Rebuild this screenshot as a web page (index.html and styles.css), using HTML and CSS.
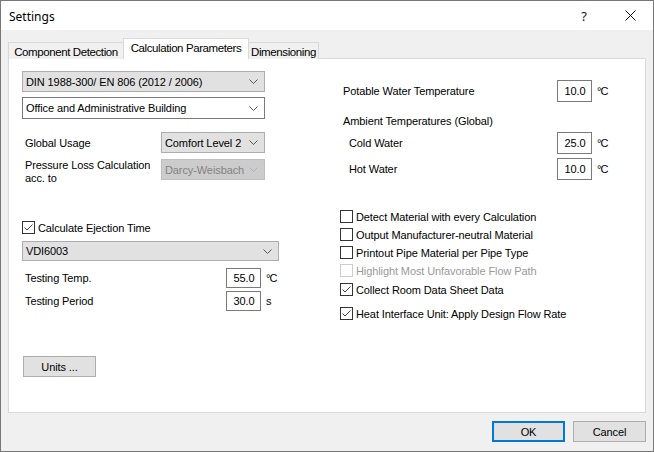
FILE: index.html
```html
<!DOCTYPE html>
<html>
<head>
<meta charset="utf-8">
<title>Settings</title>
<link rel="stylesheet" href="styles.css">
</head>
<body>
<div class="window">
  <div class="titlebar">
    <span class="title">Settings</span>
    <span class="tb-btn help">?</span>
    <span class="tb-btn close"><svg width="11" height="11" viewBox="0 0 11 11"><path d="M0.5 0.5 L10.5 10.5 M10.5 0.5 L0.5 10.5" stroke="#111" stroke-width="1" fill="none"/></svg></span>
  </div>
  <div class="tabs">
    <div class="tab tab-first">Component Detection</div>
    <div class="tab active">Calculation Parameters</div>
    <div class="tab tab-last">Dimensioning</div>
  </div>
  <div class="pane">
    <div class="col-left">
      <div class="combo combo-grey combo-norm">
        <span>DIN 1988-300/ EN 806 (2012 / 2006)</span>
        <svg class="chev" width="9" height="5" viewBox="0 0 9 5"><path d="M0.5 0.5 L4.5 4.5 L8.5 0.5" stroke="#555" fill="none"/></svg>
      </div>
      <div class="combo combo-white combo-usage">
        <span>Office and Administrative Building</span>
        <svg class="chev" width="9" height="5" viewBox="0 0 9 5"><path d="M0.5 0.5 L4.5 4.5 L8.5 0.5" stroke="#555" fill="none"/></svg>
      </div>
      <div class="frow frow-global">
        <span class="flabel">Global Usage</span>
        <div class="combo combo-grey combo-small">
          <span>Comfort Level 2</span>
          <svg class="chev" width="9" height="5" viewBox="0 0 9 5"><path d="M0.5 0.5 L4.5 4.5 L8.5 0.5" stroke="#555" fill="none"/></svg>
        </div>
      </div>
      <div class="frow frow-pressure">
        <span class="flabel two-line">Pressure Loss Calculation<br>acc. to</span>
        <div class="combo combo-disabled combo-small">
          <span>Darcy-Weisbach</span>
          <svg class="chev" width="9" height="5" viewBox="0 0 9 5"><path d="M0.5 0.5 L4.5 4.5 L8.5 0.5" stroke="#b0b0b0" fill="none"/></svg>
        </div>
      </div>
      <div class="check check-eject">
        <span class="box"><svg width="11" height="11" viewBox="0 0 11 11"><path d="M1.5 5.5 L4 8 L9.5 2.5" stroke="#444" fill="none"/></svg></span>
        <span>Calculate Ejection Time</span>
      </div>
      <div class="combo combo-grey combo-vdi">
        <span>VDI6003</span>
        <svg class="chev" width="9" height="5" viewBox="0 0 9 5"><path d="M0.5 0.5 L4.5 4.5 L8.5 0.5" stroke="#555" fill="none"/></svg>
      </div>
      <div class="irow irow-temp">
        <span class="ilabel">Testing Temp.</span>
        <span class="input">55.0</span>
        <span class="unit">°C</span>
      </div>
      <div class="irow irow-period">
        <span class="ilabel">Testing Period</span>
        <span class="input">30.0</span>
        <span class="unit">s</span>
      </div>
      <div class="btn btn-units">Units ...</div>
    </div>
    <div class="col-right">
      <div class="rrow rrow-potable">
        <span class="rlabel">Potable Water Temperature</span>
        <span class="input input-tall">10.0</span>
        <span class="unit">°C</span>
      </div>
      <div class="group-label">Ambient Temperatures (Global)</div>
      <div class="rrow rrow-cold">
        <span class="rlabel indent">Cold Water</span>
        <span class="input input-tall">25.0</span>
        <span class="unit">°C</span>
      </div>
      <div class="rrow rrow-hot">
        <span class="rlabel indent">Hot Water</span>
        <span class="input input-tall">10.0</span>
        <span class="unit">°C</span>
      </div>
      <div class="checks">
        <div class="check rcheck c1"><span class="box"></span><span>Detect Material with every Calculation</span></div>
        <div class="check rcheck c2"><span class="box"></span><span>Output Manufacturer-neutral Material</span></div>
        <div class="check rcheck c3"><span class="box"></span><span>Printout Pipe Material per Pipe Type</span></div>
        <div class="check rcheck c4 disabled"><span class="box"></span><span>Highlight Most Unfavorable Flow Path</span></div>
        <div class="check rcheck c5"><span class="box"><svg width="11" height="11" viewBox="0 0 11 11"><path d="M1.5 5.5 L4 8 L9.5 2.5" stroke="#444" fill="none"/></svg></span><span>Collect Room Data Sheet Data</span></div>
        <div class="check rcheck c6"><span class="box"><svg width="11" height="11" viewBox="0 0 11 11"><path d="M1.5 5.5 L4 8 L9.5 2.5" stroke="#444" fill="none"/></svg></span><span>Heat Interface Unit: Apply Design Flow Rate</span></div>
      </div>
    </div>
  </div>
  <div class="footer">
    <div class="btn btn-default">OK</div>
    <div class="btn">Cancel</div>
  </div>
</div>
</body>
</html>
```

FILE: styles.css
```css
html, body {
  margin: 0;
  padding: 0;
  background: #ffffff;
}

body {
  font-family: "Liberation Sans", Arial, sans-serif;
  font-size: 11px;
  letter-spacing: -0.1px;
  color: #000;
}

.window {
  width: 654px;
  height: 452px;
  box-sizing: border-box;
  border: 1px solid #777777;
  background: #f0f0f0;
  display: flex;
  flex-direction: column;
}

/* Title bar */
.titlebar {
  height: 29px;
  background: #ffffff;
  display: flex;
  align-items: center;
  flex: none;
}

.title {
  font-family: "Noto Sans", "Liberation Sans", sans-serif;
  font-size: 12px;
  letter-spacing: 0;
  padding-left: 8px;
  flex: 1;
  padding-top: 1px;
}

.tb-btn {
  height: 29px;
  display: flex;
  align-items: center;
  justify-content: center;
}

.help {
  width: 46px;
  font-family: "Noto Sans", sans-serif;
  font-size: 13px;
  color: #111;
  margin-right: 1px;
}

.close {
  width: 45px;
}

/* Tabs */
.tabs {
  display: flex;
  height: 21px;
  margin-top: 8px;
  margin-bottom: -1px;
  padding-left: 7px;
  flex: none;
  position: relative;
  z-index: 1;
}

.tab {
  box-sizing: border-box;
  height: 17px;
  margin-top: 4px;
  border: 1px solid #d9d9d9;
  border-bottom: none;
  background: #f0f0f0;
  display: flex;
  align-items: center;
  justify-content: center;
  font-size: 11.5px;
  letter-spacing: -0.4px;
  padding-top: 1px;
  white-space: nowrap;
}

.tab-first {
  width: 115px;
  border-right: none;
}

.tab.active {
  width: 126px;
  height: 21px;
  margin-top: 0;
  background: #ffffff;
  padding-top: 0;
  padding-bottom: 2px;
}

.tab-last {
  width: 70px;
  border-left: none;
}

/* Pane */
.pane {
  box-sizing: border-box;
  height: 355px;
  margin: 0 7px;
  border: 1px solid #d9d9d9;
  background: #ffffff;
  display: flex;
  flex: none;
}

.col-left {
  width: 257px;
  margin-left: 13px;
  display: flex;
  flex-direction: column;
}

.col-right {
  margin-left: 60px;
  width: 290px;
  display: flex;
  flex-direction: column;
}

/* Combos */
.combo {
  box-sizing: border-box;
  display: flex;
  align-items: center;
  justify-content: space-between;
  padding: 0 6px 0 3px;
  border: 1px solid #adadad;
  white-space: nowrap;
}

.combo-grey {
  background: #e1e1e1;
}

.combo-white {
  background: #ffffff;
  border-color: #7a7a7a;
}

.combo-disabled {
  background: #cccccc;
  border-color: #bfbfbf;
  color: #838383;
}

.combo-norm {
  width: 243px;
  height: 21px;
  margin-top: 12px;
}

.combo-usage {
  width: 243px;
  height: 22px;
  margin-top: 5px;
}

.combo-small {
  width: 104px;
  height: 21px;
}

.combo-vdi {
  width: 257px;
  height: 20px;
  margin-top: 7px;
}

.chev {
  flex: none;
}

/* Form rows (label + combo) */
.frow {
  display: flex;
  align-items: center;
}

.flabel {
  width: 139px;
  box-sizing: border-box;
  padding-left: 3px;
  white-space: nowrap;
}

.frow-global {
  margin-top: 13px;
}

.frow-pressure {
  margin-top: 6px;
  align-items: flex-start;
}

.two-line {
  line-height: 13px;
}

/* Checkboxes */
.check {
  display: flex;
  align-items: center;
  height: 13px;
  white-space: nowrap;
}

.box {
  box-sizing: border-box;
  width: 13px;
  height: 13px;
  border: 1px solid #333333;
  background: #ffffff;
  display: flex;
  align-items: center;
  justify-content: center;
  flex: none;
}

.check-eject {
  margin-top: 36px;
  gap: 3px;
}

.rcheck {
  margin-left: 1px;
  gap: 3px;
}

.check.disabled {
  color: #9a9a9a;
}

.check.disabled .box {
  border-color: #cccccc;
}

.checks {
  display: flex;
  flex-direction: column;
  margin-top: 30px;
}

.c2, .c3, .c4 {
  margin-top: 5px;
}

.c5 {
  margin-top: 6px;
}

.c6 {
  margin-top: 11px;
}

/* Input rows */
.irow, .rrow {
  display: flex;
  align-items: center;
}

.ilabel {
  width: 204px;
  box-sizing: border-box;
  padding-left: 3px;
}

.irow-temp {
  margin-top: 7px;
}

.irow-period {
  margin-top: 3px;
}

.input {
  box-sizing: border-box;
  width: 35px;
  height: 20px;
  border: 1px solid #7a7a7a;
  background: #ffffff;
  display: flex;
  align-items: center;
  justify-content: center;
  padding-left: 1px;
}

.input-tall {
  height: 22px;
}

.unit {
  margin-left: 5px;
  letter-spacing: -1px;
}

.rlabel {
  width: 218px;
  box-sizing: border-box;
  padding-left: 4px;
}

.rlabel.indent {
  padding-left: 10px;
}

.rrow-potable {
  margin-top: 21px;
}

.group-label {
  margin-top: 13px;
  padding-left: 4px;
  line-height: 13px;
}

.rrow-cold {
  margin-top: 4px;
}

.rrow-hot {
  margin-top: 4px;
}

/* Buttons */
.btn {
  box-sizing: border-box;
  width: 73px;
  height: 21px;
  background: #e1e1e1;
  border: 1px solid #adadad;
  display: flex;
  align-items: center;
  justify-content: center;
}

.btn-units {
  margin-top: 45px;
  margin-left: 1px;
}

.btn-default {
  border: 2px solid #0078d7;
}

.footer {
  display: flex;
  justify-content: flex-end;
  gap: 8px;
  margin-top: 8px;
  padding-right: 7px;
  flex: none;
}
```
